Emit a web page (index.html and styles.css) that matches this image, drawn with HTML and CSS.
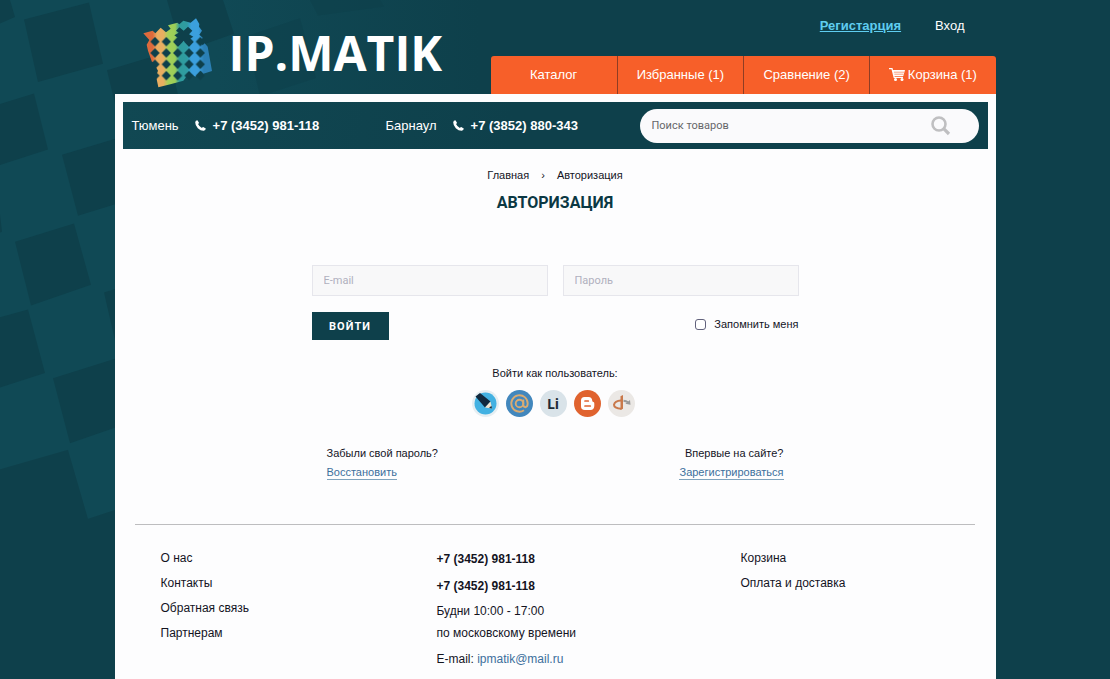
FILE: index.html
```
<!DOCTYPE html>
<html lang="ru">
<head>
    <meta charset="UTF-8">
    <meta name="viewport" content="width=device-width, initial-scale=1.0">
    <title>Авторизация - IP.MATIK</title>
    <link rel="stylesheet" href="styles.css">
</head>
<body>
    <svg class="pattern" width="480" height="520" viewBox="0 0 480 400" preserveAspectRatio="none" aria-hidden="true">
        <defs>
            <linearGradient id="fade" x1="0" x2="1" y1="0" y2="0">
                <stop offset="0" stop-color="#104955"/>
                <stop offset="0.45" stop-color="#104955"/>
                <stop offset="1" stop-color="#0e404b"/>
            </linearGradient>
        </defs>
        <path fill="url(#fade)" d="M0 0H480V300L88 399L68 346L0 361Z"/>
        <g fill="#0e404b">
            <path d="M0 0H10L15 13L0 18Z"/>
            <path d="M24 15L89 2L103 49L38 63Z"/>
            <path d="M107 54L168 40L182 86L122 102Z"/>
            <path d="M0 80L34 72L48 115L0 127Z"/>
            <path d="M62 119L127 104L141 151L78 166Z"/>
            <path d="M15 186L74 172L91 219L31 235Z"/>
            <path d="M104 225L166 210L180 256L118 272Z"/>
            <path d="M0 244L28 238L45 287L0 298Z"/>
            <path d="M53 291L115 276L130 325L70 341Z"/>
            <path d="M167 0H223L234 26L182 40Z"/>
            <path d="M0 165L2 178L0 179Z"/>
        </g>
        <g fill="#0e404b" opacity="0.5">
            <path d="M246 28L300 14L316 60L260 74Z"/>
            <path d="M310 0H380L384 5L318 12Z"/>
        </g>
    </svg>

    <div class="page">
        <header class="header">
            <a class="logo" href="#">
                <svg class="logo-mark" width="70" height="70" viewBox="9 24 210 210" aria-hidden="true">
                    <defs>
                        <linearGradient id="stripes" gradientUnits="userSpaceOnUse" x1="9" x2="219" y1="0" y2="0">
                            <stop offset="0.14" stop-color="#dd6a3c"/>
                            <stop offset="0.2" stop-color="#e9ae61"/>
                            <stop offset="0.29" stop-color="#e9ae61"/>
                            <stop offset="0.36" stop-color="#a3d158"/>
                            <stop offset="0.46" stop-color="#9bcd58"/>
                            <stop offset="0.52" stop-color="#2f9c9c"/>
                            <stop offset="0.63" stop-color="#2f9ca2"/>
                            <stop offset="0.69" stop-color="#3b9fdd"/>
                            <stop offset="0.79" stop-color="#3b9fdd"/>
                            <stop offset="0.87" stop-color="#2b7fb4"/>
                        </linearGradient>
                        <pattern id="holes" patternUnits="userSpaceOnUse" x="28" y="78" width="34" height="34">
                            <path fill="#0e404b" d="M17 3L31 17L17 31L3 17Z"/>
                        </pattern>
                    </defs>
                    <path fill="url(#stripes)" d="M10 70L38 62L46 70L62 53L78 67L92 56L84 46L112 38L118 43L130 32L152 38L168 25L178 42L177 50L186 62L178 74L188 83L182 95L188 106L194 100L203 110L216 183L190 191L182 182L166 200L148 188L130 212L94 222L55 232L48 198L54 182L46 168L52 158L36 156L24 122L20 104L28 90Z"/>
                    <path fill="url(#holes)" d="M28 78H198V214H28Z"/>
                    <path fill="#0e404b" d="M108 62L118 52L131 62L144 50L157 62L147 73L160 80L148 88L160 96L147 110L131 92L114 110L101 96L114 84L103 76L116 68Z"/>
                </svg>
                <span class="logo-text">IP.MATIK</span>
            </a>
            <div class="header-right">
                <div class="account">
                    <a class="account-register" href="#">Регистарция</a>
                    <a href="#">Вход</a>
                </div>
                <nav class="menu">
                    <a href="#">Каталог</a>
                    <a href="#">Избранные (1)</a>
                    <a href="#">Сравнение (2)</a>
                    <a href="#">
                        <svg width="16" height="13" viewBox="0 0 16 13" aria-hidden="true">
                            <path d="M0 .7H3L5.2 9.3H14" fill="none" stroke="#fff" stroke-width="1.3"/>
                            <path fill="#fff" d="M3.5 2H16L14.3 8H5Z"/>
                            <path d="M5 4.2H15M5.4 6.2H14.5" stroke="#f75f29" stroke-width=".6"/>
                            <circle cx="6.5" cy="11.4" r="1.5" fill="#fff"/>
                            <circle cx="13" cy="11.4" r="1.5" fill="#fff"/>
                        </svg>
                        Корзина (1)
                    </a>
                </nav>
            </div>
        </header>

        <div class="content">
            <div class="topbar">
                <div class="city">
                    <span>Тюмень</span>
                    <svg width="11" height="11" viewBox="0 0 11 11" aria-hidden="true"><path fill="#fff" d="M2.4.2L4 2.8Q4 3.4 3 4.1Q4.200 6.700 6.900 8Q7.600 7 8.200 7L10.800 8.600Q10.700 10.600 8.700 10.800Q5.700 10.900 2.800 8.200Q.1 5.200.2 2.300Q.5.300 2.400.2Z"/></svg>
                    <b>+7 (3452) 981-118</b>
                </div>
                <div class="city">
                    <span>Барнаул</span>
                    <svg width="11" height="11" viewBox="0 0 11 11" aria-hidden="true"><path fill="#fff" d="M2.4.2L4 2.8Q4 3.4 3 4.1Q4.200 6.700 6.900 8Q7.600 7 8.200 7L10.800 8.600Q10.700 10.600 8.700 10.800Q5.700 10.900 2.800 8.200Q.1 5.200.2 2.300Q.5.300 2.400.2Z"/></svg>
                    <b>+7 (3852) 880-343</b>
                </div>
                <form class="search">
                    <input type="text" placeholder="Поиск товаров" aria-label="Поиск товаров">
                    <button type="submit" aria-label="Найти">
                        <svg width="20" height="20" viewBox="0 0 20 20" fill="none" stroke="#bfbfc1" aria-hidden="true">
                            <circle cx="8" cy="8" r="6.500" stroke-width="2.600"/>
                            <path d="M12.700 12.700L18 18" stroke-width="3.200"/>
                        </svg>
                    </button>
                </form>
            </div>

            <main class="main">
                <nav class="breadcrumbs">
                    <a href="#">Главная</a>
                    <span>›</span>
                    <span>Авторизация</span>
                </nav>
                <h1>АВТОРИЗАЦИЯ</h1>

                <form class="login">
                    <div class="fields">
                        <input type="email" placeholder="E-mail" aria-label="E-mail">
                        <input type="password" placeholder="Пароль" aria-label="Пароль">
                    </div>
                    <div class="actions">
                        <button type="submit">ВОЙТИ</button>
                        <label><input type="checkbox"> Запомнить меня</label>
                    </div>
                </form>

                <p class="social-title">Войти как пользователь:</p>
                <div class="social">
                    <a href="#" aria-label="LiveJournal">
                        <svg viewBox="0 0 27 27">
                            <circle cx="13.500" cy="13.500" r="13.500" fill="#e6eef2"/>
                            <circle cx="13.500" cy="13.500" r="11" fill="#42b1e2"/>
                            <path fill="#10283d" d="M3.500 6.500L8 3L18.500 11.500L13 17.500Z"/>
                            <path fill="#f3e4cf" d="M18.500 11.500L20 18.500L13 17.500Z"/>
                            <path fill="#10283d" d="M19.400 15.800L20 18.500L17 18.100Z"/>
                        </svg>
                    </a>
                    <a href="#" aria-label="Mail.ru">
                        <svg viewBox="0 0 27 27">
                            <circle cx="13.500" cy="13.500" r="13.500" fill="#4287bd"/>
                            <g fill="none" stroke="#d9ab73" stroke-width="1.900">
                                <circle cx="13.500" cy="13.500" r="3.800"/>
                                <path d="M17.300 9.500V14.800Q17.400 17.200 19.400 17.200Q21.700 16.700 21.700 13.500A8.200 8.200 0 1 0 18 20.300"/>
                            </g>
                        </svg>
                    </a>
                    <a class="social-li" href="#">Li</a>
                    <a href="#" aria-label="Blogger">
                        <svg viewBox="0 0 27 27">
                            <circle cx="13.500" cy="13.500" r="13.500" fill="#e0632f"/>
                            <path fill="#fff" d="M10.500 7H14.500Q18 7 18.300 11Q18.500 12 19.500 12Q20.300 12.200 20.300 13.500V16Q20 20 16.500 20H10.800Q7 20 7 16.200V10.500Q7 7 10.500 7Z"/>
                            <path d="M11 11H14.300M11 16H16.300" stroke="#e0632f" stroke-width="1.700" stroke-linecap="round"/>
                        </svg>
                    </a>
                    <a href="#" aria-label="OpenID">
                        <svg viewBox="0 0 27 27">
                            <circle cx="13.500" cy="13.500" r="13.500" fill="#ebe8e5"/>
                            <path d="M13.500 18.800Q6 18.300 6 14.700Q6.800 11 13 10.600" fill="none" stroke="#c9784a" stroke-width="2"/>
                            <path d="M15.500 10.700Q18.200 11 20 12.300" fill="none" stroke="#999" stroke-width="2"/>
                            <path fill="#999" d="M22 10L22.500 14.800L17.400 13.800Z"/>
                            <path fill="#c9784a" d="M12.500 6.300L15 5V18.700L12.500 20Z"/>
                        </svg>
                    </a>
                </div>

                <div class="help">
                    <div>
                        <p>Забыли свой пароль?</p>
                        <a href="#">Восстановить</a>
                    </div>
                    <div class="help-right">
                        <p>Впервые на сайте?</p>
                        <a href="#">Зарегистрироваться</a>
                    </div>
                </div>
            </main>

            <footer class="footer">
                <ul>
                    <li><a href="#">О нас</a></li>
                    <li><a href="#">Контакты</a></li>
                    <li><a href="#">Обратная связь</a></li>
                    <li><a href="#">Партнерам</a></li>
                </ul>
                <div class="contacts">
                    <b>+7 (3452) 981-118</b>
                    <b>+7 (3452) 981-118</b>
                    <p>Будни 10:00 - 17:00<br>по московскому времени</p>
                    <p>E-mail: <a href="mailto:ipmatik@mail.ru">ipmatik@mail.ru</a></p>
                </div>
                <ul>
                    <li><a href="#">Корзина</a></li>
                    <li><a href="#">Оплата и доставка</a></li>
                </ul>
            </footer>
        </div>
    </div>
</body>
</html>
```

FILE: styles.css
```
:root {
    --bg-color: #0e404b;
    --text-color: #14141e;
    --accent: #f75f29;
    --link: #3c6f9c;
}

* {
    box-sizing: border-box;
}

body {
    margin: 0;
    min-height: 100vh;
    background: var(--bg-color);
    color: var(--text-color);
    font-family: "Liberation Sans", Arial, sans-serif;
    font-size: 11px;
}

a {
    color: inherit;
    text-decoration: none;
}

p, ul, h1 {
    margin: 0;
    padding: 0;
}

ul {
    list-style: none;
}

.pattern {
    position: absolute;
    top: 0;
    left: 0;
    z-index: -1;
}

.page {
    max-width: 881px;
    min-height: 100vh;
    margin: 0 auto;
    display: flex;
    flex-direction: column;
}

/* header */
.header {
    display: flex;
    justify-content: space-between;
    height: 94px;
}

.logo {
    display: flex;
    align-items: center;
    gap: 16px;
    padding: 12px 0 0 28px;
    color: #fff;
}

.logo-text {
    font: bold 48px/50px "Open Sans", sans-serif;
}

.header-right {
    display: flex;
    flex-direction: column;
    justify-content: space-between;
    width: 505px;
}

.account {
    display: flex;
    justify-content: flex-end;
    gap: 34px;
    padding: 18px 31px 0 0;
    color: #fff;
    font-size: 13px;
}

.account-register {
    color: #5fcdf0;
    font-weight: bold;
    text-decoration: underline;
}

.menu {
    display: grid;
    grid-template-columns: repeat(4, 1fr);
    background: var(--accent);
    border-radius: 3px 3px 0 0;
    color: #fff;
    font-size: 13px;
}

.menu a {
    display: flex;
    align-items: center;
    justify-content: center;
    gap: 3px;
    height: 38px;
    padding-bottom: 1px;
}

.menu a + a {
    border-left: 1px solid #8e3d24;
}

/* content */
.content {
    flex: 1;
    padding: 8px 8px 0;
    background: #fdfdfe;
}

.topbar {
    display: grid;
    grid-template-columns: 254px 1fr 339px;
    align-items: center;
    height: 47px;
    padding: 0 9px;
    background: linear-gradient(100deg, #114853, var(--bg-color) 45%);
    color: #fff;
    font-size: 13px;
}

.city {
    display: flex;
    align-items: center;
}

.city svg {
    margin: 0 7px 0 16px;
}

.search {
    display: flex;
    align-items: center;
    height: 34px;
    padding: 0 28px 0 12px;
    border-radius: 17px;
    background: #fafafc;
}

.search input {
    flex: 1;
    min-width: 0;
    padding: 0;
    border: none;
    outline: none;
    background: none;
    font: 11px Roboto, sans-serif;
}

.search input::placeholder {
    color: #66666a;
}

.search button {
    display: flex;
    padding: 0;
    border: none;
    background: none;
    cursor: pointer;
}

.main {
    max-width: 487px;
    margin: 0 auto;
    padding-top: 19px;
}

.breadcrumbs {
    display: flex;
    justify-content: center;
    gap: 12px;
    line-height: 14px;
}

h1 {
    margin-top: 9px;
    color: #0b3843;
    font: bold 16px/24px Roboto, sans-serif;
    text-align: center;
}

.login {
    margin-top: 50px;
}

.fields {
    display: grid;
    grid-template-columns: 1fr 1fr;
    gap: 15px;
}

.fields input {
    width: 100%;
    height: 31px;
    padding: 0 11px;
    border: 1px solid #e6e6ec;
    background: #f8f8f9;
    font: 11px Roboto, sans-serif;
}

.fields input::placeholder {
    color: #b0b0be;
}

.actions {
    display: flex;
    justify-content: space-between;
    align-items: flex-start;
    margin-top: 16px;
}

.actions button {
    width: 77px;
    height: 28px;
    border: none;
    background: var(--bg-color);
    color: #fff;
    font: bold 11px Roboto, sans-serif;
    letter-spacing: 1px;
    cursor: pointer;
}

.actions label {
    display: flex;
    align-items: center;
    gap: 8px;
    height: 24px;
}

.actions input {
    appearance: none;
    width: 11px;
    height: 11px;
    margin: 0;
    border: 1px solid #62627c;
    border-radius: 3px;
    background: #fff;
}

.actions input:checked {
    background: var(--bg-color);
}

.social-title {
    margin-top: 26px;
    line-height: 14px;
    text-align: center;
}

.social {
    display: flex;
    justify-content: center;
    gap: 7px;
    margin-top: 10px;
    padding-right: 4px;
}

.social a,
.social svg {
    display: block;
    width: 27px;
    height: 27px;
}

.social-li {
    border-radius: 50%;
    background: #d9e3e9;
    color: #1d2b36;
    font: bold 14px/27px "Open Sans", sans-serif;
    text-align: center;
}

.help {
    display: flex;
    justify-content: space-between;
    margin-top: 27px;
    padding: 0 15px;
    line-height: 19px;
}

.help a {
    padding-bottom: 1px;
    border-bottom: 1px solid #7fa3bd;
    color: var(--link);
}

.help-right {
    text-align: right;
}

/* footer */
.footer {
    display: grid;
    grid-template-columns: 276px 304px 1fr;
    margin: 42px 13px 0 12px;
    padding: 21px 26px 8px;
    border-top: 1px solid #bdbdbf;
    font-size: 12px;
    line-height: 25px;
}

.contacts b {
    display: block;
    line-height: 27px;
}

.contacts p {
    line-height: 22px;
}

.contacts p + p {
    margin-top: 4px;
}

.contacts a {
    color: var(--link);
}
```
